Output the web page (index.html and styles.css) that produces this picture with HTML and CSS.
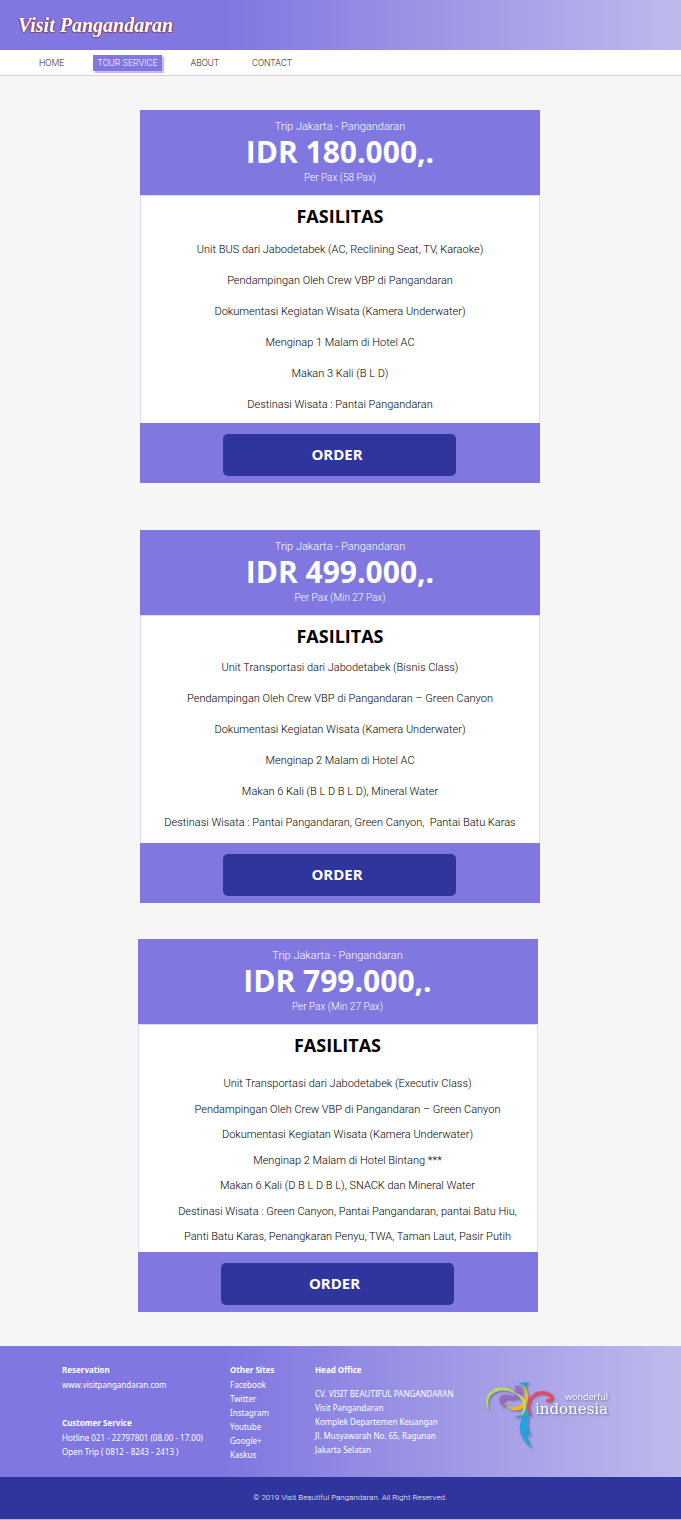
FILE: index.html
```html
<!DOCTYPE html>
<html lang="id">
<head>
<meta charset="utf-8">
<meta name="viewport" content="width=device-width, initial-scale=1">
<title>Visit Pangandaran</title>
<link rel="stylesheet" href="styles.css">
</head>
<body>
<header class="banner"><a class="brand" href="#">Visit Pangandaran</a></header>
<nav class="nav">
  <a class="nav-link" href="#">HOME</a>
  <a class="nav-link active" href="#" aria-current="page">TOUR SERVICE</a>
  <a class="nav-link" href="#">ABOUT</a>
  <a class="nav-link" href="#">CONTACT</a>
</nav>
<main class="packages">
  <article class="card">
    <header class="card-head">
      <p class="trip">Trip Jakarta - Pangandaran</p>
      <p class="price">IDR 180.000,.</p>
      <p class="pax">Per Pax (58 Pax)</p>
    </header>
    <div class="card-body">
      <h2 class="card-title">FASILITAS</h2>
      <ul class="facilities">
        <li>Unit BUS dari Jabodetabek (AC, Reclining Seat, TV, Karaoke)</li>
        <li>Pendampingan Oleh Crew VBP di Pangandaran</li>
        <li>Dokumentasi Kegiatan Wisata (Kamera Underwater)</li>
        <li>Menginap 1 Malam di Hotel AC</li>
        <li>Makan 3 Kali (B L D)</li>
        <li>Destinasi Wisata : Pantai Pangandaran</li>
      </ul>
    </div>
    <footer class="card-foot"><button class="order" type="button">ORDER</button></footer>
  </article>
  <article class="card">
    <header class="card-head">
      <p class="trip">Trip Jakarta - Pangandaran</p>
      <p class="price">IDR 499.000,.</p>
      <p class="pax">Per Pax (Min 27 Pax)</p>
    </header>
    <div class="card-body">
      <h2 class="card-title">FASILITAS</h2>
      <ul class="facilities raised">
        <li>Unit Transportasi dari Jabodetabek (Bisnis Class)</li>
        <li>Pendampingan Oleh Crew VBP di Pangandaran – Green Canyon</li>
        <li>Dokumentasi Kegiatan Wisata (Kamera Underwater)</li>
        <li>Menginap 2 Malam di Hotel AC</li>
        <li>Makan 6 Kali (B L D B L D), Mineral Water</li>
        <li>Destinasi Wisata : Pantai Pangandaran, Green Canyon,&nbsp; Pantai Batu Karas</li>
      </ul>
    </div>
    <footer class="card-foot"><button class="order" type="button">ORDER</button></footer>
  </article>
  <article class="card card-last">
    <header class="card-head">
      <p class="trip">Trip Jakarta - Pangandaran</p>
      <p class="price">IDR 799.000,.</p>
      <p class="pax">Per Pax (Min 27 Pax)</p>
    </header>
    <div class="card-body">
      <h2 class="card-title">FASILITAS</h2>
      <ul class="facilities dense">
        <li>Unit Transportasi dari Jabodetabek (Executiv Class)</li>
        <li>Pendampingan Oleh Crew VBP di Pangandaran – Green Canyon</li>
        <li>Dokumentasi Kegiatan Wisata (Kamera Underwater)</li>
        <li>Menginap 2 Malam di Hotel Bintang ***</li>
        <li>Makan 6 Kali (D B L D B L), SNACK dan Mineral Water</li>
        <li>Destinasi Wisata : Green Canyon, Pantai Pangandaran, pantai Batu Hiu,</li>
        <li>Panti Batu Karas, Penangkaran Penyu, TWA, Taman Laut, Pasir Putih</li>
      </ul>
    </div>
    <footer class="card-foot"><button class="order" type="button">ORDER</button></footer>
  </article>
</main>
<footer class="site-footer">
  <div class="contact">
    <section>
      <h3>Reservation</h3>
      <p><a href="#">www.visitpangandaran.com</a></p>
    </section>
    <section>
      <h3>Customer Service</h3>
      <p>Hotline 021 - 22797801 (08.00 - 17.00)</p>
      <p>Open Trip ( 0812 - 8243 - 2413 )</p>
    </section>
  </div>
  <section class="sites">
    <h3>Other Sites</h3>
    <p><a href="#">Facebook</a></p>
    <p><a href="#">Twitter</a></p>
    <p><a href="#">Instagram</a></p>
    <p><a href="#">Youtube</a></p>
    <p><a href="#">Google+</a></p>
    <p><a href="#">Kaskus</a></p>
  </section>
  <section class="office">
    <h3>Head Office</h3>
    <p>CV. VISIT BEAUTIFUL PANGANDARAN</p>
    <p>Visit Pangandaran</p>
    <p>Komplek Departemen Keuangan</p>
    <p>Jl. Musyawarah No. 65, Ragunan</p>
    <p>Jakarta Selatan</p>
  </section>
  <div class="partner">
    <svg class="bird" viewBox="0 0 225 216" aria-hidden="true">
      <path fill="#26a3da" d="M107 10q10 4 17 1 8-3 18 1l-10 7q3 14-1 26-5-15-12-26-4-6-12-9z"/>
      <path fill="#26a3da" d="M137 80c-4 18-22 30-41 36 18 2 26-2 30-7-14 20-16 40-7 62 7 17 20 29 32 36-12-17-18-35-19-52 5 10 10 16 16 20-10-22-11-38-8-58 1-14 2-26-3-37z"/>
      <path fill="#f8b51d" d="M116 14c16 14 17 42 5 58-12 15-33 17-47 6 8 20 36 22 53 6 18-18 16-56-11-70z"/>
      <path fill="#f8b51d" d="M67 70l8 9-8-2z"/>
      <path fill="#9a6cc0" d="M98 20c20-2 27 18 19 32-8 13-25 11-36 9-13-3-20 8-10 25-16-6-24-24-15-34 12-13 30 2 43-3 7-4 1-10-5-10 8-5 10-12 4-19z"/>
      <path fill="#b7d66b" d="M23 95C2 74 12 38 42 27c22-7 45-1 60 15 20 7 32 20 31 40-1 14-8 24-17 31 11-24 10-49-9-64-13-11-36-17-55-13C22 42 12 67 23 95z"/>
      <path fill="#f0465b" d="M154 118c-22-18-24-51-5-69 17-17 42-16 56-6 15 9 11 27-4 27-9 0-12-7-6-11 8 5 13-3 5-8-14-9-35-6-46 5-15 15-14 40 0 62z"/>
    </svg>
    <p class="wordmark"><span class="wordmark-small">wonderful</span><span class="wordmark-large">indonesia</span></p>
  </div>
</footer>
<div class="copyright">© 2019 Visit Beautiful Pangandaran. All Right Reserved.</div>
</body>
</html>
```
FILE: styles.css
```css
* { box-sizing: border-box; }
body {
  margin: 0;
  background: #f6f6f6;
  color: #222;
  font: 300 11px/16px Roboto, "Liberation Sans", sans-serif;
}
h2, h3, p, ul { margin: 0; padding: 0; }
ul { list-style: none; }
a { color: inherit; text-decoration: none; }
.banner, .site-footer {
  background: linear-gradient(90deg, #8077e0 33%, #bfbaec);
}
.banner {
  display: flex;
  align-items: center;
  height: 50px;
  padding: 0 18px;
}
.brand {
  color: #fff;
  font: italic bold 20px/24px "Liberation Serif", serif;
  text-shadow: 1px 0 1px #80406f, -1px 0 1px #80406f, 0 1px 1px #80406f;
}
.nav {
  display: flex;
  align-items: center;
  gap: 25px;
  height: 26px;
  padding: 0 35px;
  background: #fff;
  border-bottom: 1px solid #dacfd3;
  font-size: 9px;
}
.nav-link { padding: 0 4px; }
.active {
  background: #8077e0;
  color: #fff;
  box-shadow: 2px 2px 1px #c3beef;
}
.packages {
  display: flex;
  flex-direction: column;
  align-items: center;
  padding: 34px 17px 34px 16px;
}
.card {
  width: 100%;
  max-width: 400px;
  margin-bottom: 47px;
  background: #fff;
  text-align: center;
}
.card:nth-child(2) { margin-bottom: 36px; }
.card-last { margin: 0 5px 0 0; }
.card-head {
  min-height: 85px;
  padding-top: 9px;
  background: #8077e0;
  color: #fff;
}
.price { font: bold 30px/34px "Open Sans", sans-serif; }
.pax {
  font-size: 10px;
  line-height: 18px;
}
.card-body {
  display: flex;
  flex-direction: column;
  min-height: 228px;
  border: 1px solid #dedbf7;
  border-bottom: 0;
  color: #000;
}
.card-title {
  padding-top: 8px;
  font: bold 18px/24px "Open Sans", sans-serif;
}
.facilities { padding-top: 6px; }
.facilities li { line-height: 31px; }
.facilities.raised { padding-top: 4px; }
.facilities.dense {
  display: flex;
  flex: 1;
  flex-direction: column;
  padding: 15px 0 1px 20px;
}
.dense li {
  flex: 1;
  line-height: 24px;
}
.card-foot {
  padding: 11px 84px 7px 83px;
  background: #8077e0;
}
.order {
  display: block;
  width: 100%;
  height: 42px;
  padding: 0 5px 2px 0;
  border: 0;
  border-radius: 5px;
  background: #30349d;
  color: #fff;
  font: bold 15px/20px "Open Sans", sans-serif;
}
.site-footer {
  display: flex;
  min-height: 131px;
  padding: 16px 62px 0;
  color: #fff;
  font: 8px/14px "Noto Sans", sans-serif;
}
.site-footer h3 { font: bold 8px/16px "Noto Sans", sans-serif; }
.contact { width: 168px; }
.contact section + section { margin-top: 23px; }
.sites { width: 85px; }
.office { width: 167px; }
.office h3 { margin-bottom: 9px; }
.partner {
  display: flex;
  align-items: flex-start;
  padding-top: 17px;
  filter: drop-shadow(1px 1px 1px #6c6799);
}
.bird {
  flex: none;
  width: 75px;
  height: 72px;
  margin-right: -22px;
}
.wordmark {
  display: flex;
  flex-direction: column;
  align-items: flex-end;
  padding-top: 13px;
}
.wordmark-small { font: 9px/10px "Open Sans", sans-serif; }
.wordmark-large { font: 15px/15px "DejaVu Serif", serif; }
.copyright {
  padding: 13px 16px 13px 35px;
  border-bottom: 1px solid #b0aed8;
  background: #30349d;
  color: #fff;
  text-align: center;
  font-size: 8px;
}
```
